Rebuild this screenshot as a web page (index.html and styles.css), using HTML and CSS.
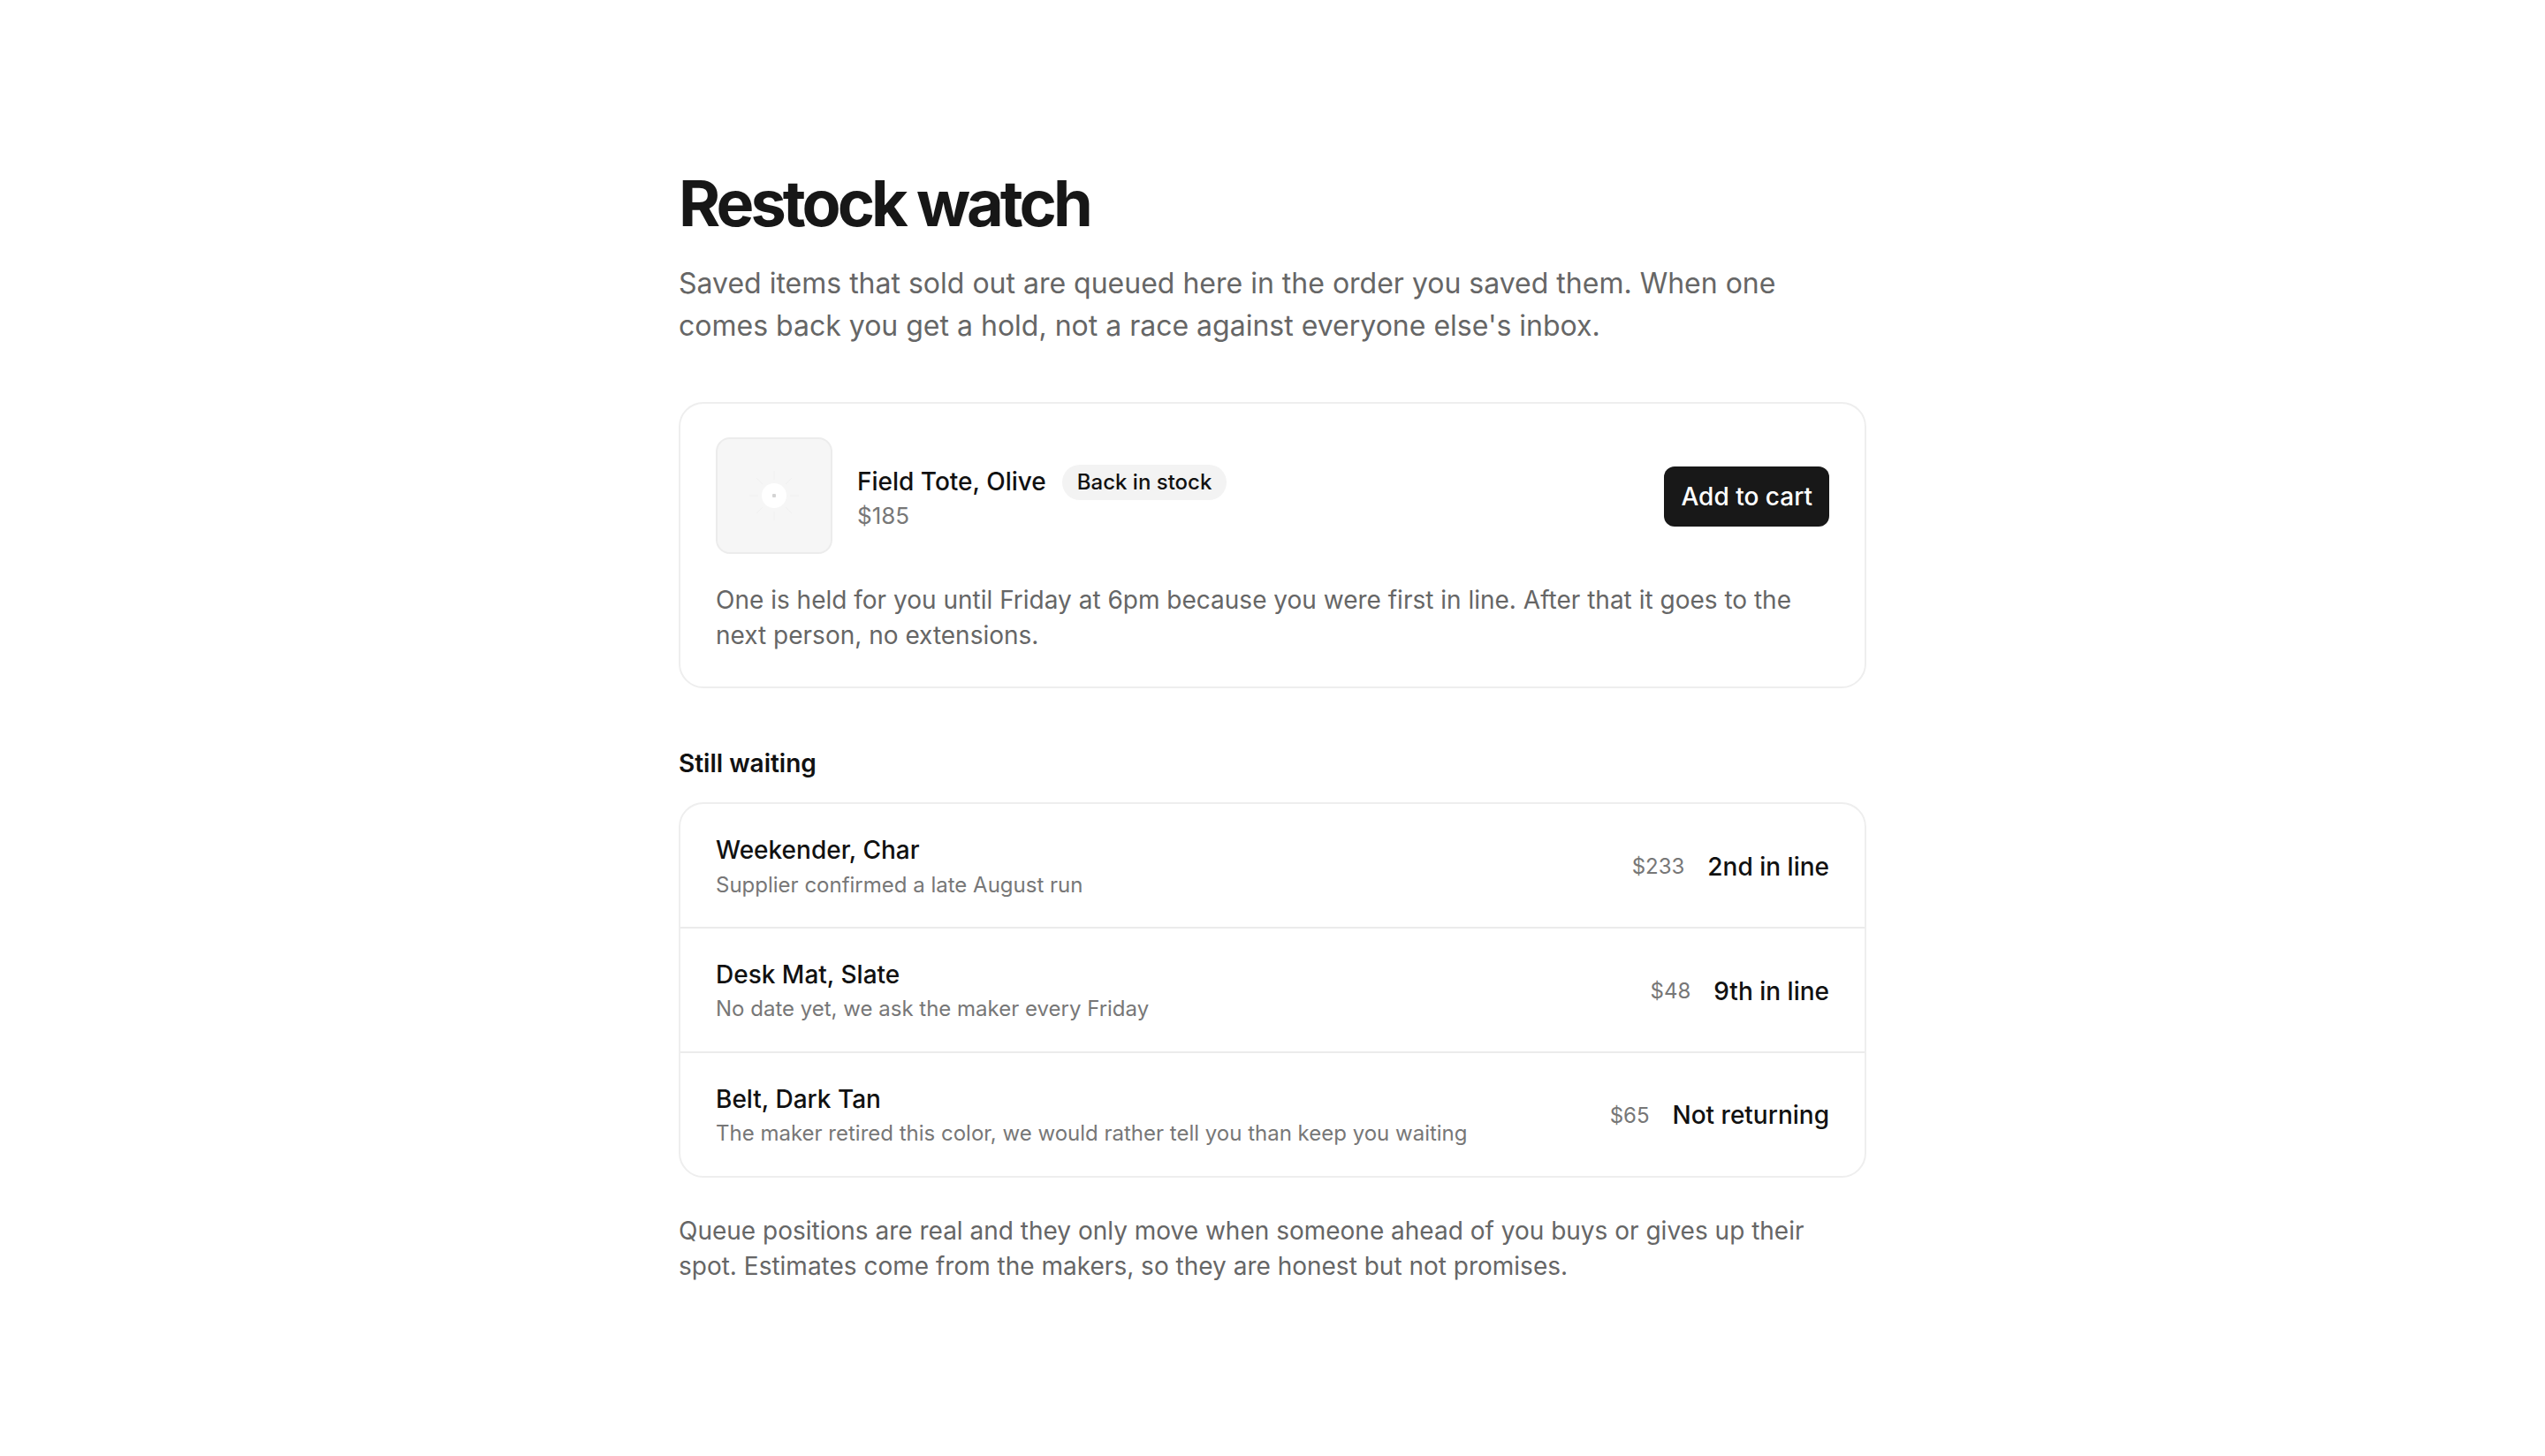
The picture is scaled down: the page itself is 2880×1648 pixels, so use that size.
FILE: index.html
```html
<!DOCTYPE html>
<html lang="en">
<head>
<meta charset="utf-8">
<title>Restock watch</title>
<link rel="stylesheet" href="styles.css">
</head>
<body>
<main class="page">
  <header class="intro">
    <h1 class="title">Restock watch</h1>
    <p class="lede">Saved items that sold out are queued here in the order you saved them. When one comes back you get a hold, not a race against everyone else's inbox.</p>
  </header>

  <section class="hold-card">
    <div class="hold-top">
      <div class="thumb">
        <svg class="thumb-mark" width="64" height="64" viewBox="0 0 64 64" aria-hidden="true">
          <g stroke="#f0f0f0" stroke-width="1">
            <line x1="32" y1="4" x2="32" y2="14"/>
            <line x1="32" y1="50" x2="32" y2="60"/>
            <line x1="4" y1="32" x2="14" y2="32"/>
            <line x1="50" y1="32" x2="60" y2="32"/>
            <line x1="12" y1="12" x2="19" y2="19"/>
            <line x1="45" y1="45" x2="52" y2="52"/>
            <line x1="52" y1="12" x2="45" y2="19"/>
            <line x1="12" y1="52" x2="19" y2="45"/>
          </g>
          <circle cx="32" cy="32" r="14" fill="#ffffff"/>
          <rect x="30" y="30" width="4" height="4" rx="1" fill="#d4d4d4"/>
        </svg>
      </div>
      <div class="hold-info">
        <div class="hold-name-row">
          <span class="hold-name">Field Tote, Olive</span>
          <span class="badge">Back in stock</span>
        </div>
        <div class="hold-price">$185</div>
      </div>
      <button class="btn-cart" type="button">Add to cart</button>
    </div>
    <p class="hold-note">One is held for you until Friday at 6pm because you were first in line. After that it goes to the next person, no extensions.</p>
  </section>

  <h2 class="section-title">Still waiting</h2>

  <ul class="queue">
    <li class="queue-row">
      <div class="queue-text">
        <div class="queue-name">Weekender, Char</div>
        <div class="queue-sub">Supplier confirmed a late August run</div>
      </div>
      <div class="queue-meta">
        <span class="queue-price">$233</span>
        <span class="queue-pos">2nd in line</span>
      </div>
    </li>
    <li class="queue-row">
      <div class="queue-text">
        <div class="queue-name">Desk Mat, Slate</div>
        <div class="queue-sub">No date yet, we ask the maker every Friday</div>
      </div>
      <div class="queue-meta">
        <span class="queue-price">$48</span>
        <span class="queue-pos">9th in line</span>
      </div>
    </li>
    <li class="queue-row">
      <div class="queue-text">
        <div class="queue-name">Belt, Dark Tan</div>
        <div class="queue-sub">The maker retired this color, we would rather tell you than keep you waiting</div>
      </div>
      <div class="queue-meta">
        <span class="queue-price">$65</span>
        <span class="queue-pos">Not returning</span>
      </div>
    </li>
  </ul>

  <p class="footnote">Queue positions are real and they only move when someone ahead of you buys or gives up their spot. Estimates come from the makers, so they are honest but not promises.</p>
</main>
</body>
</html>
```

FILE: styles.css
```css
* { box-sizing: border-box; }

html, body {
  margin: 0;
  padding: 0;
  background: #ffffff;
}

body {
  font-family: Inter, "Noto Sans", "Liberation Sans", sans-serif;
  color: #111111;
}

.page {
  width: 1344px;
  margin: 0 auto;
  padding: 190px 0 120px;
}

.intro {
  display: flex;
  flex-direction: column;
  gap: 28px;
}

.title {
  margin: 0;
  font-size: 72px;
  line-height: 1.1;
  font-weight: 700;
  letter-spacing: -0.055em;
  color: #171717;
}

.lede {
  margin: 0;
  font-size: 32px;
  line-height: 48px;
  color: #666666;
}

.hold-card {
  margin-top: 62px;
  border: 2px solid #eeeeee;
  border-radius: 28px;
  padding: 38px 40px 38px;
  display: flex;
  flex-direction: column;
  gap: 32px;
}

.hold-top {
  display: flex;
  align-items: center;
  gap: 28px;
}

.thumb {
  width: 132px;
  height: 132px;
  flex: none;
  border: 2px solid #ececec;
  border-radius: 16px;
  background: #f6f6f6;
  display: flex;
  align-items: center;
  justify-content: center;
}

.hold-info {
  flex: 1;
  display: flex;
  flex-direction: column;
  gap: 0;
  padding-top: 6px;
}

.hold-name-row {
  display: flex;
  align-items: center;
  gap: 18px;
}

.hold-name {
  font-size: 28px;
  line-height: 1.4;
  font-weight: 500;
  color: #111111;
}

.badge {
  font-size: 24px;
  line-height: 40px;
  padding: 0 17px;
  border-radius: 999px;
  background: #f3f3f3;
  font-weight: 500;
  color: #111111;
}

.hold-price {
  font-size: 26px;
  line-height: 1.4;
  color: #777777;
}

.btn-cart {
  flex: none;
  font-family: inherit;
  font-size: 28px;
  font-weight: 500;
  color: #ffffff;
  background: #181818;
  border: none;
  border-radius: 12px;
  height: 68px;
  padding: 0 19px;
  margin-top: 2px;
}

.hold-note {
  margin: 0;
  font-size: 28px;
  line-height: 40px;
  color: #666666;
}

.section-title {
  margin: 66px 0 24px;
  font-size: 28px;
  line-height: 1.4;
  font-weight: 600;
  color: #111111;
}

.queue {
  list-style: none;
  margin: 0;
  padding: 0;
  border: 2px solid #eeeeee;
  border-radius: 28px;
}

.queue-row {
  display: flex;
  align-items: center;
  justify-content: space-between;
  gap: 32px;
  padding: 33px 40px 31px;
}

.queue-row + .queue-row {
  border-top: 2px solid #ebebeb;
}

.queue-text {
  display: flex;
  flex-direction: column;
  gap: 2px;
}

.queue-name {
  font-size: 28px;
  line-height: 1.4;
  font-weight: 500;
  color: #111111;
}

.queue-sub {
  font-size: 24px;
  line-height: 1.4;
  color: #777777;
}

.queue-meta {
  display: flex;
  align-items: center;
  gap: 26px;
  flex: none;
}

.queue-price {
  font-size: 24px;
  color: #777777;
}

.queue-pos {
  font-size: 28px;
  font-weight: 500;
  color: #111111;
}

.footnote {
  margin: 40px 0 0;
  font-size: 28px;
  line-height: 40px;
  color: #666666;
}
```
